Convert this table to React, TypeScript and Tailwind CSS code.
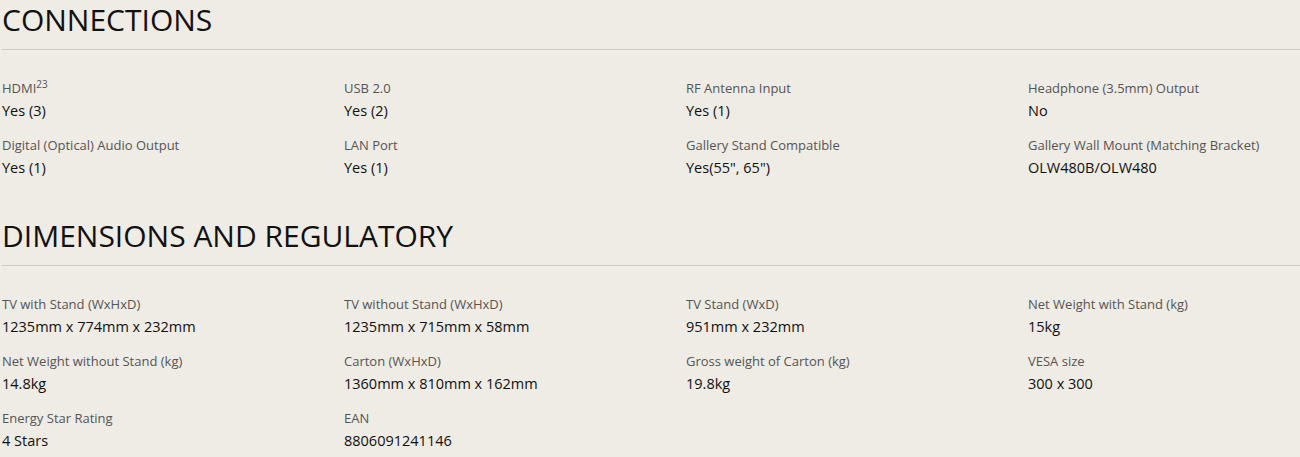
import React from "react";

type Spec = { label: React.ReactNode; value: string };

const connections: Spec[] = [
  { label: <>HDMI<sup className="text-[10px]">23</sup></>, value: "Yes (3)" },
  { label: "USB 2.0", value: "Yes (2)" },
  { label: "RF Antenna Input", value: "Yes (1)" },
  { label: "Headphone (3.5mm) Output", value: "No" },
  { label: "Digital (Optical) Audio Output", value: "Yes (1)" },
  { label: "LAN Port", value: "Yes (1)" },
  { label: "Gallery Stand Compatible", value: 'Yes(55", 65")' },
  { label: "Gallery Wall Mount (Matching Bracket)", value: "OLW480B/OLW480" },
];

const dimensions: Spec[] = [
  { label: "TV with Stand (WxHxD)", value: "1235mm x 774mm x 232mm" },
  { label: "TV without Stand (WxHxD)", value: "1235mm x 715mm x 58mm" },
  { label: "TV Stand (WxD)", value: "951mm x 232mm" },
  { label: "Net Weight with Stand (kg)", value: "15kg" },
  { label: "Net Weight without Stand (kg)", value: "14.8kg" },
  { label: "Carton (WxHxD)", value: "1360mm x 810mm x 162mm" },
  { label: "Gross weight of Carton (kg)", value: "19.8kg" },
  { label: "VESA size", value: "300 x 300" },
  { label: "Energy Star Rating", value: "4 Stars" },
  { label: "EAN", value: "8806091241146" },
];

function Section({ title, items }: { title: string; items: Spec[] }) {
  return (
    <section>
      <h2 className="text-[30px] leading-[40px] font-normal text-[#111]">{title}</h2>
      <div className="mt-[9px] h-px bg-[#cbc8c2]" />
      <div className="grid grid-cols-[repeat(4,342px)] gap-y-[14px] pt-[29px]">
        {items.map((it, i) => (
          <div key={i} className="flex flex-col gap-[3px]">
            <div className="text-[13px] leading-[18px] text-[#555]">{it.label}</div>
            <div className="text-[14.5px] leading-[22px] text-[#111]">{it.value}</div>
          </div>
        ))}
      </div>
    </section>
  );
}

export default function App() {
  return (
    <div
      className="w-[1300px] h-[457px] overflow-hidden bg-[#efebe5] pl-[2px]"
      style={{ fontFamily: '"Open Sans", "Noto Sans", sans-serif' }}
    >
      <Section title="CONNECTIONS" items={connections} />
      <div className="h-[37px]" />
      <Section title="DIMENSIONS AND REGULATORY" items={dimensions} />
    </div>
  );
}
